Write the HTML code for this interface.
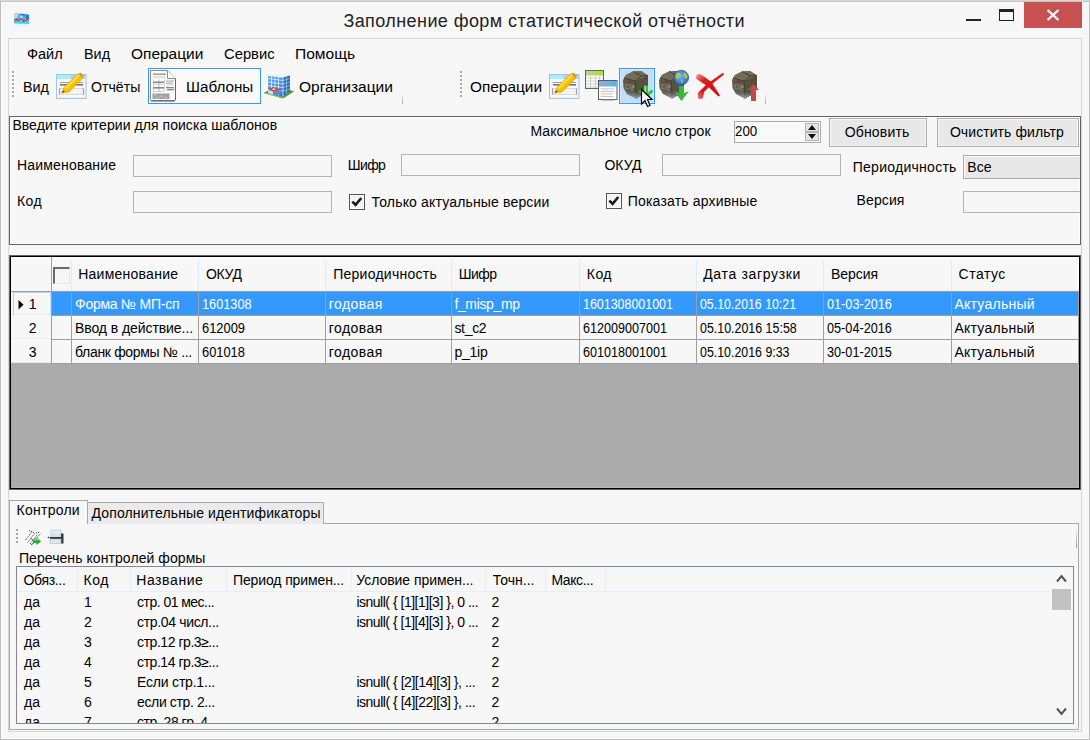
<!DOCTYPE html><html><head><meta charset="utf-8"><style>
html,body{margin:0;padding:0;width:1090px;height:740px;overflow:hidden;background:#f7f7f7}
.t{position:absolute;white-space:nowrap;font-family:"Liberation Sans",sans-serif;}
.r{position:absolute;}
</style></head><body>
<div class="r" style="left:0px;top:0px;width:1090px;height:740px;background:#f7f7f7;"></div>
<div class="r" style="left:1px;top:2px;width:1088px;height:737px;box-sizing:border-box;border-left:1px solid #fbfbfb;border-top:1px solid #fbfbfb;border-bottom:1px solid #fbfbfb;"></div>
<div class="r" style="left:0px;top:0px;width:1090px;height:1px;background:#d9d9d9;"></div>
<div class="r" style="left:0px;top:1px;width:1090px;height:1px;background:#c6c6c6;"></div>
<div class="r" style="left:0px;top:1px;width:1px;height:739px;background:#bebebe;"></div>
<div class="r" style="left:1089px;top:1px;width:1px;height:739px;background:#c0c0c0;"></div>
<div class="r" style="left:0px;top:739px;width:1090px;height:1px;background:#bdbdbd;"></div>
<div class="r" style="left:8px;top:38px;width:1074px;height:694px;box-sizing:border-box;border:1px solid #d6d6d6;"></div>
<svg class="r" style="left:13px;top:12px" width="17" height="16" viewBox="0 0 17 16">
<defs><linearGradient id="ai" x1="0" y1="0" x2="0" y2="1"><stop offset="0" stop-color="#3896f2"/><stop offset="1" stop-color="#48d0fa"/></linearGradient></defs>
<path d="M1 1 L7 1.5 L16 2.5 L16 12 L1 11.5Z" fill="url(#ai)"/>
<path d="M1 1 L6 1.5 L5 5 L1 8Z" fill="#b8dcf8"/>
<path d="M7 3.5 L10 3 L9 8 L7 9Z" fill="#d8ecfa" opacity="0.8"/>
<rect x="8" y="2.2" width="3.5" height="1.3" fill="#1a6ee0"/>
<rect x="13" y="3" width="3" height="4" fill="#1a7ae8"/>
<path d="M9.5 8.5 L11.5 8.5 L11.5 11 L9.5 11Z" fill="#40e070"/>
<path d="M12 7.5 L13 7.5 L13 11 L12 11Z" fill="#f0f040"/>
<polyline points="1.5,8.5 3,7 4.5,8.3 6.5,8 8,6.5 9.5,7.8 11,9.5 12.5,8.5 14,7.5 16,6" fill="none" stroke="#e82a18" stroke-width="1.1"/>
<path d="M1 12 L16 12.5 L15 15 L2 14Z" fill="#dcf2fc" opacity="0.8"/>
</svg>
<div class="t" style="left:343.40px;top:11.76px;font-size:18px;line-height:18px;color:#222;letter-spacing:0.419px;">Заполнение форм статистической отчётности</div>
<div class="r" style="left:966px;top:19px;width:15px;height:2px;background:#222;"></div>
<div class="r" style="left:999px;top:9px;width:15px;height:12px;box-sizing:border-box;border:1px solid #222;border-top:3px solid #222;"></div>
<div class="r" style="left:1024px;top:2px;width:58px;height:26px;background:#c75050;"></div>
<div class="r" style="left:1082px;top:2px;width:1px;height:27px;background:#fdfdfd;"></div>
<svg class="r" style="left:1046px;top:9px" width="14" height="12" viewBox="0 0 14 12"><path d="M1.5 1 L12.5 11 M12.5 1 L1.5 11" stroke="#fff" stroke-width="2.2"/></svg>
<div class="t" style="left:27.00px;top:45.95px;font-size:15.3px;line-height:15.3px;color:#000;transform:scaleX(0.9495);transform-origin:0 0;">Файл</div>
<div class="t" style="left:84.30px;top:45.95px;font-size:15.3px;line-height:15.3px;color:#000;transform:scaleX(0.9422);transform-origin:0 0;">Вид</div>
<div class="t" style="left:130.60px;top:45.95px;font-size:15.3px;line-height:15.3px;color:#000;transform:scaleX(1.0105);transform-origin:0 0;">Операции</div>
<div class="t" style="left:223.60px;top:45.95px;font-size:15.3px;line-height:15.3px;color:#000;transform:scaleX(0.9656);transform-origin:0 0;">Сервис</div>
<div class="t" style="left:294.90px;top:45.95px;font-size:15.3px;line-height:15.3px;color:#000;transform:scaleX(1.0169);transform-origin:0 0;">Помощь</div>
<div class="r" style="left:12px;top:71px;width:2px;height:2px;background:#a9a9a9;"></div>
<div class="r" style="left:12px;top:75px;width:2px;height:2px;background:#a9a9a9;"></div>
<div class="r" style="left:12px;top:79px;width:2px;height:2px;background:#a9a9a9;"></div>
<div class="r" style="left:12px;top:83px;width:2px;height:2px;background:#a9a9a9;"></div>
<div class="r" style="left:12px;top:87px;width:2px;height:2px;background:#a9a9a9;"></div>
<div class="r" style="left:12px;top:91px;width:2px;height:2px;background:#a9a9a9;"></div>
<div class="r" style="left:12px;top:95px;width:2px;height:2px;background:#a9a9a9;"></div>
<div class="t" style="left:22.70px;top:78.95px;font-size:15.3px;line-height:15.3px;color:#000;transform:scaleX(0.9350);transform-origin:0 0;">Вид</div>
<svg class="r" style="left:56px;top:72px" width="32" height="28" viewBox="0 0 32 28">
<defs><linearGradient id="tb56" x1="0" x2="1"><stop offset="0" stop-color="#a8f0f8"/><stop offset="0.45" stop-color="#a8f0f8"/><stop offset="0.5" stop-color="#b0d0f4"/><stop offset="1" stop-color="#b8d4f4"/></linearGradient></defs>
<rect x="0.5" y="2.5" width="29.5" height="24" fill="#f8f8f8" stroke="#9cc4f0"/>
<rect x="1" y="3" width="29" height="4" fill="url(#tb56)"/>
<rect x="3" y="8" width="25" height="17" fill="#fdfdfd" stroke="#e0e0e0" stroke-width="0.5"/>
<rect x="4" y="10" width="23" height="1" fill="#9a9a9a"/>
<rect x="4" y="12" width="23" height="1.6" fill="#70747c"/>
<rect x="3.5" y="16.5" width="24" height="6" fill="#f4f4f4" stroke="#d0d0d0" stroke-width="0.8"/><rect x="3.2" y="16.5" width="0.9" height="6" fill="#909090"/><rect x="26.9" y="16.5" width="0.9" height="6" fill="#909090"/>
<path d="M5.5 21 L8 15.5 L22 1.5 L27 6 L13 20 Z" fill="#f6c000" stroke="#d8a000" stroke-width="0.6"/>
<path d="M8.5 16 L22.5 2 L24 3.5 L10 17.5Z" fill="#ffe040"/>
<path d="M22.5 2 L24.5 0.5 L28 4 L26.5 6 Z" fill="#c8a040"/>
<path d="M6 21 L7.3 18.4 L8.6 19.7Z" fill="#333"/>
</svg>
<div class="t" style="left:91.00px;top:78.95px;font-size:15.3px;line-height:15.3px;color:#000;transform:scaleX(0.9232);transform-origin:0 0;">Отчёты</div>
<div class="r" style="left:148px;top:68px;width:113px;height:36px;box-sizing:border-box;border:1px solid #3399ff;background:#f9f9f9;"></div>
<svg class="r" style="left:150px;top:70px" width="27" height="32" viewBox="0 0 27 32">
<path d="M0.5 0.5 H17.5 L25.5 8.5 V29.5 Q25.5 30.5 24.5 30.5 H1.5 Q0.5 30.5 0.5 29.5Z" fill="#fbfbfb" stroke="#8c8c8c"/>
<path d="M1 30.5 H25 V31.5 H1Z" fill="#555"/>
<path d="M25.5 9 V30" stroke="#666"/>
<path d="M17.5 0.5 V8.5 H25.5" fill="#fff" stroke="#8a8a8a"/>
<g fill="#8a8a8a">
<rect x="3" y="3.5" width="13" height="1.4" opacity="0.9"/>
<rect x="3" y="6.5" width="12" height="1" opacity="0.5"/>
<rect x="3" y="11.5" width="11" height="1.6"/>
<rect x="3" y="17" width="11" height="1.6"/>
<rect x="3" y="9.5" width="0.7" height="12" opacity="0.5"/><rect x="8.5" y="9.5" width="0.8" height="12" opacity="0.7"/><rect x="14" y="9.5" width="0.7" height="12" opacity="0.5"/>
<rect x="3" y="14.3" width="11" height="0.6" opacity="0.4"/><rect x="3" y="21" width="11" height="0.7" opacity="0.5"/>
<rect x="16" y="10.5" width="8" height="1" opacity="0.7"/><rect x="16" y="12.5" width="7" height="1.2" opacity="0.7"/><rect x="17" y="14.5" width="6" height="0.8" opacity="0.5"/>
<rect x="16" y="17" width="8" height="1.3"/><rect x="17" y="19" width="7" height="1.3"/>
<rect x="2.5" y="23.5" width="17" height="5.5" opacity="0.8"/>
</g>
<g fill="#d8d8d8"><rect x="4" y="24.5" width="3" height="0.8"/><rect x="9" y="25.8" width="4" height="0.8"/><rect x="14" y="27" width="3" height="0.8"/><rect x="5" y="27.5" width="4" height="0.7"/></g>
</svg>
<div class="t" style="left:186.30px;top:78.95px;font-size:15.3px;line-height:15.3px;color:#000;transform:scaleX(0.9948);transform-origin:0 0;">Шаблоны</div>
<svg class="r" style="left:263px;top:73px" width="32" height="26" viewBox="0 0 32 26">
<defs><linearGradient id="bl" x1="0" y1="0" x2="1" y2="1"><stop offset="0" stop-color="#5aaaf0"/><stop offset="1" stop-color="#2a78d8"/></linearGradient></defs>
<path d="M0.5 20 L20 25.5 L31 18.5 L24 16 L6 17Z" fill="#4a9a30"/>
<path d="M0.5 20 L20 25.5 L20 24.5 L2 19.5Z" fill="#8ac870"/>
<path d="M5 2 L17 0.5 L27 2.5 L20 4.5Z" fill="#eef2f6"/>
<path d="M5 2.5 L20 4.5 L20 23.5 L5 19.5Z" fill="url(#bl)"/>
<path d="M20 4.5 L27 2.5 L27 18 L20 23.5Z" fill="#2e6cc0"/>
<g stroke="#e8f0f8" stroke-width="0.8" fill="none">
<path d="M5 5.5 L20 7.5 M5 9 L20 11 M5 12.5 L20 14.5 M5 16 L20 18 M8.5 3 V20.5 M12 3.5 V21.5 M15.5 4 V22.5"/>
</g>
<g stroke="#a8c4e8" stroke-width="0.7" fill="none">
<path d="M20 7.5 L27 5.5 M20 11 L27 9 M20 14.5 L27 12.5 M20 18 L27 16 M23.5 3.5 V21"/>
</g>
<path d="M5 2.5 L20 4.5 L20 23.5" stroke="#f4f8fc" stroke-width="0.7" fill="none"/>
<path d="M4.5 15.5 L13 14.5 L18 17 L10 18.5Z" fill="#e63a2a"/>
<path d="M9 15.8 L12 15.6 L13 16.6 L10 16.9Z" fill="#fff"/>
<path d="M5 17 L10 18.5 L10 22 L5 20Z" fill="#d8dce0"/>
<path d="M10 18.5 L18 17 L18 21 L10 22Z" fill="#4a90e0"/>
</svg>
<div class="t" style="left:298.80px;top:78.95px;font-size:15.3px;line-height:15.3px;color:#000;transform:scaleX(1.0157);transform-origin:0 0;">Организации</div>
<div class="r" style="left:402px;top:94px;width:1px;height:10px;background:linear-gradient(#eeeeee,#a8a8a8);"></div>
<div class="r" style="left:460px;top:71px;width:2px;height:2px;background:#a9a9a9;"></div>
<div class="r" style="left:460px;top:75px;width:2px;height:2px;background:#a9a9a9;"></div>
<div class="r" style="left:460px;top:79px;width:2px;height:2px;background:#a9a9a9;"></div>
<div class="r" style="left:460px;top:83px;width:2px;height:2px;background:#a9a9a9;"></div>
<div class="r" style="left:460px;top:87px;width:2px;height:2px;background:#a9a9a9;"></div>
<div class="r" style="left:460px;top:91px;width:2px;height:2px;background:#a9a9a9;"></div>
<div class="r" style="left:460px;top:95px;width:2px;height:2px;background:#a9a9a9;"></div>
<div class="t" style="left:469.70px;top:78.95px;font-size:15.3px;line-height:15.3px;color:#000;transform:scaleX(1.0063);transform-origin:0 0;">Операции</div>
<svg class="r" style="left:549px;top:72px" width="32" height="28" viewBox="0 0 32 28">
<defs><linearGradient id="tb549" x1="0" x2="1"><stop offset="0" stop-color="#a8f0f8"/><stop offset="0.45" stop-color="#a8f0f8"/><stop offset="0.5" stop-color="#b0d0f4"/><stop offset="1" stop-color="#b8d4f4"/></linearGradient></defs>
<rect x="0.5" y="2.5" width="29.5" height="24" fill="#f8f8f8" stroke="#9cc4f0"/>
<rect x="1" y="3" width="29" height="4" fill="url(#tb549)"/>
<rect x="3" y="8" width="25" height="17" fill="#fdfdfd" stroke="#e0e0e0" stroke-width="0.5"/>
<rect x="4" y="10" width="23" height="1" fill="#9a9a9a"/>
<rect x="4" y="12" width="23" height="1.6" fill="#70747c"/>
<rect x="3.5" y="16.5" width="24" height="6" fill="#f4f4f4" stroke="#d0d0d0" stroke-width="0.8"/><rect x="3.2" y="16.5" width="0.9" height="6" fill="#909090"/><rect x="26.9" y="16.5" width="0.9" height="6" fill="#909090"/>
<path d="M5.5 21 L8 15.5 L22 1.5 L27 6 L13 20 Z" fill="#f6c000" stroke="#d8a000" stroke-width="0.6"/>
<path d="M8.5 16 L22.5 2 L24 3.5 L10 17.5Z" fill="#ffe040"/>
<path d="M22.5 2 L24.5 0.5 L28 4 L26.5 6 Z" fill="#c8a040"/>
<path d="M6 21 L7.3 18.4 L8.6 19.7Z" fill="#333"/>
</svg>
<svg class="r" style="left:584px;top:69px" width="34" height="32" viewBox="0 0 34 32">
<defs><linearGradient id="tg" x1="0" x2="1"><stop offset="0" stop-color="#b4d890"/><stop offset="1" stop-color="#a8e030"/></linearGradient>
<linearGradient id="tbl" x1="0" x2="1"><stop offset="0" stop-color="#90acd0"/><stop offset="0.6" stop-color="#78b0e0"/><stop offset="1" stop-color="#40b8f8"/></linearGradient></defs>
<rect x="1.5" y="1.5" width="18" height="18" fill="#fbfbfb" stroke="#606468"/>
<rect x="2" y="2" width="17" height="4.5" fill="url(#tg)"/>
<g stroke="#b8b8b8" stroke-width="0.6"><path d="M2 9 H19 M2 12 H19 M2 15 H19 M2 18 H19 M6.5 6.5 V19 M11.5 6.5 V19 M15.5 6.5 V19"/></g>
<rect x="6" y="8" width="1.5" height="1" fill="#e8e060"/>
<rect x="14.5" y="11.5" width="18.5" height="19" fill="#fdfdfd" stroke="#585c60"/>
<rect x="15" y="12" width="17.5" height="5.5" fill="url(#tbl)"/>
<g fill="#b8b8b8"><rect x="16.5" y="19.5" width="14" height="0.8"/><rect x="16.5" y="22" width="14" height="0.8"/><rect x="16.5" y="24.5" width="12" height="0.8"/><rect x="16.5" y="27" width="13" height="0.8"/></g>
<g fill="#f0e070"><rect x="17" y="19" width="1.5" height="1"/><rect x="22" y="21.5" width="2" height="1"/><rect x="18" y="26.5" width="1.5" height="1"/></g>
<rect x="18" y="30.5" width="12" height="1" fill="#909090"/>
</svg>
<div class="r" style="left:619px;top:68px;width:36px;height:36px;box-sizing:border-box;border:1px solid #3399ff;background:#c2ddf9;box-shadow:inset 0 0 0 1px #d3e6fb;"></div>
<svg class="r" style="left:622px;top:70px" width="28" height="30" viewBox="0 0 28 30">
<defs><linearGradient id="cbt622" x1="0" y1="0" x2="0" y2="1"><stop offset="0.5" stop-color="#8a96b4" stop-opacity="0"/><stop offset="1" stop-color="#a0acc8" stop-opacity="0.9"/></linearGradient></defs>
<path d="M1 10 L4 5 L11 1.5 L19 1 L26 5.5 L26 19 L22 24 L14 28.5 L5 24 L1.5 18Z" fill="#5f5c4a"/>
<path d="M4 5 L11 1.5 L19 1 L26 5.5 L13 11 L2 8Z" fill="#716d59"/>
<path d="M13 11 L26 5.5 L26 19 L22 24 L14 28.5Z" fill="#55523f"/>
<path d="M2 8 L13 11 L14 28.5 M11 1.5 L19 6 L26 5.5 M19 6 L13 11" stroke="#3a382c" stroke-width="0.8" fill="none"/>
<g fill="#8c8870" opacity="0.9"><path d="M3.5 14 h3 v1 h-2 v3 h2 v1 h-3z"/><rect x="7.5" y="14.5" width="1" height="5"/><path d="M9.5 15 h3 v3 h-2 v3 h-1z"/></g>
<rect x="3" y="12" width="9" height="1" fill="#4a4838" opacity="0.7"/>
<path d="M1.5 16 L5 24 L14 28.5 L22 24 L26 19 L26 16 L14 21 L2 15Z" fill="url(#cbt622)"/>
<g fill="#a02020"><circle cx="8" cy="11" r="0.9"/><circle cx="16" cy="4" r="0.9"/><circle cx="21" cy="11" r="0.9"/><circle cx="24" cy="8.5" r="0.9"/></g>
</svg>
<svg class="r" style="left:638px;top:85px" width="16" height="14" viewBox="0 0 16 14"><path d="M6 0.5 H10 V7.5 L13.5 4.5 L15.5 6.5 L8 13.5 L0.5 6.5 L2.5 4.5 L6 7.5Z" fill="#3cbc40"/><path d="M6.5 1 H8 V8 H6.5Z" fill="#90f090"/></svg>
<svg class="r" style="left:640px;top:88px" width="14" height="20" viewBox="0 0 14 20"><path d="M1.5 1.5 L1.5 16 L5 12.5 L7.5 18.5 L10 17.5 L7.5 11.5 L12 11.5 Z" fill="#fff" stroke="#000" stroke-width="1.2" stroke-linejoin="miter"/></svg>
<svg class="r" style="left:658px;top:70px" width="28" height="30" viewBox="0 0 28 30">
<defs><linearGradient id="cbt658" x1="0" y1="0" x2="0" y2="1"><stop offset="0.5" stop-color="#8a96b4" stop-opacity="0"/><stop offset="1" stop-color="#a0acc8" stop-opacity="0.9"/></linearGradient></defs>
<path d="M1 10 L4 5 L11 1.5 L19 1 L26 5.5 L26 19 L22 24 L14 28.5 L5 24 L1.5 18Z" fill="#5f5c4a"/>
<path d="M4 5 L11 1.5 L19 1 L26 5.5 L13 11 L2 8Z" fill="#716d59"/>
<path d="M13 11 L26 5.5 L26 19 L22 24 L14 28.5Z" fill="#55523f"/>
<path d="M2 8 L13 11 L14 28.5 M11 1.5 L19 6 L26 5.5 M19 6 L13 11" stroke="#3a382c" stroke-width="0.8" fill="none"/>
<g fill="#8c8870" opacity="0.9"><path d="M3.5 14 h3 v1 h-2 v3 h2 v1 h-3z"/><rect x="7.5" y="14.5" width="1" height="5"/><path d="M9.5 15 h3 v3 h-2 v3 h-1z"/></g>
<rect x="3" y="12" width="9" height="1" fill="#4a4838" opacity="0.7"/>
<path d="M1.5 16 L5 24 L14 28.5 L22 24 L26 19 L26 16 L14 21 L2 15Z" fill="url(#cbt658)"/>
<g fill="#a02020"><circle cx="8" cy="11" r="0.9"/><circle cx="16" cy="4" r="0.9"/><circle cx="21" cy="11" r="0.9"/><circle cx="24" cy="8.5" r="0.9"/></g>
</svg>
<svg class="r" style="left:673px;top:69px" width="18" height="18" viewBox="0 0 18 18">
<defs><radialGradient id="gl" cx="0.45" cy="0.4" r="0.65"><stop offset="0" stop-color="#70b8f0"/><stop offset="1" stop-color="#2a64c0"/></radialGradient></defs>
<circle cx="8.3" cy="8.6" r="7.3" fill="url(#gl)" stroke="#2a5aa8" stroke-width="0.8"/>
<path d="M3 5 Q5 3 7 4 Q8 6 6.5 7.5 Q5 8 5.5 10 Q4 10.5 3 9Z M11 3.5 Q14 4.5 14.5 8 Q13.5 10 12 9.5 Q10.5 7 11 3.5Z M8 11 Q10 10.5 10 13 Q9 14.5 8 13Z" fill="#b8c834"/>
</svg>
<svg class="r" style="left:674px;top:86px" width="16" height="16" viewBox="0 0 16 16"><path d="M5 0 H10 V7 L15 5 L7.5 15 L0 5 L5 7Z" fill="#38b83c"/></svg>
<svg class="r" style="left:693px;top:70px" width="34" height="32" viewBox="0 0 34 32">
<defs><linearGradient id="xa" x1="0" y1="0" x2="1" y2="1"><stop offset="0" stop-color="#f4a0a0"/><stop offset="0.3" stop-color="#e02020"/><stop offset="1" stop-color="#d00808"/></linearGradient>
<linearGradient id="xb" x1="0" y1="1" x2="1" y2="0"><stop offset="0" stop-color="#f08080"/><stop offset="0.25" stop-color="#d81010"/><stop offset="1" stop-color="#e02020"/></linearGradient></defs>
<path d="M3 6.5 Q4 3 7.5 4.2 L18 11.5 L27 25.5 L25.5 26.5 L15 16.5 L4.5 9.8 Q2.5 8.5 3 6.5Z" fill="url(#xa)"/>
<path d="M31 3.2 L30.5 5 L18.5 14.5 L11 22 L10.2 27.5 Q8 30 5.2 28.5 L4.8 23 L14 14 L29.5 3Z" fill="url(#xb)"/>
</svg>
<svg class="r" style="left:731px;top:70px" width="28" height="30" viewBox="0 0 28 30">
<defs><linearGradient id="cbt731" x1="0" y1="0" x2="0" y2="1"><stop offset="0.5" stop-color="#8a96b4" stop-opacity="0"/><stop offset="1" stop-color="#a0acc8" stop-opacity="0.9"/></linearGradient></defs>
<path d="M1 10 L4 5 L11 1.5 L19 1 L26 5.5 L26 19 L22 24 L14 28.5 L5 24 L1.5 18Z" fill="#5f5c4a"/>
<path d="M4 5 L11 1.5 L19 1 L26 5.5 L13 11 L2 8Z" fill="#716d59"/>
<path d="M13 11 L26 5.5 L26 19 L22 24 L14 28.5Z" fill="#55523f"/>
<path d="M2 8 L13 11 L14 28.5 M11 1.5 L19 6 L26 5.5 M19 6 L13 11" stroke="#3a382c" stroke-width="0.8" fill="none"/>
<g fill="#8c8870" opacity="0.9"><path d="M3.5 14 h3 v1 h-2 v3 h2 v1 h-3z"/><rect x="7.5" y="14.5" width="1" height="5"/><path d="M9.5 15 h3 v3 h-2 v3 h-1z"/></g>
<rect x="3" y="12" width="9" height="1" fill="#4a4838" opacity="0.7"/>
<path d="M1.5 16 L5 24 L14 28.5 L22 24 L26 19 L26 16 L14 21 L2 15Z" fill="url(#cbt731)"/>
<g fill="#a02020"><circle cx="8" cy="11" r="0.9"/><circle cx="16" cy="4" r="0.9"/><circle cx="21" cy="11" r="0.9"/><circle cx="24" cy="8.5" r="0.9"/></g>
</svg>
<svg class="r" style="left:748px;top:84px" width="11" height="18" viewBox="0 0 11 18"><path d="M5.5 0 L11 6 H8 V17 H3 V6 H0Z" fill="#c84848"/></svg>
<div class="r" style="left:765px;top:94px;width:1px;height:10px;background:linear-gradient(#eeeeee,#a8a8a8);"></div>
<div class="r" style="left:9px;top:116px;width:1072px;height:129px;box-sizing:border-box;border:1px solid #646464;"></div>
<div class="r" style="left:10px;top:117px;width:1070px;height:127px;box-sizing:border-box;border:1px solid #ffffff;"></div>
<div class="t" style="left:12.40px;top:118.05px;font-size:14px;line-height:14px;color:#000;letter-spacing:0.057px;">Введите критерии для поиска шаблонов</div>
<div class="t" style="left:530.40px;top:123.65px;font-size:14px;line-height:14px;color:#000;letter-spacing:0.093px;">Максимальное число строк</div>
<div class="r" style="left:734px;top:121px;width:87px;height:22px;box-sizing:border-box;border:1px solid #aaaaaa;background:#f9f9f9;"></div>
<div class="t" style="left:735.40px;top:123.85px;font-size:14px;line-height:14px;color:#000;transform:scaleX(0.9507);transform-origin:0 0;">200</div>
<div class="r" style="left:805px;top:123px;width:14px;height:9px;box-sizing:border-box;border:1px solid #b4b4b4;background:#e6e6e6;"></div>
<div class="r" style="left:805px;top:132px;width:14px;height:9px;box-sizing:border-box;border:1px solid #b4b4b4;background:#e6e6e6;"></div>
<svg class="r" style="left:808px;top:125px" width="8" height="5" viewBox="0 0 8 5"><path d="M0 5 L4 0 L8 5Z" fill="#111"/></svg>
<svg class="r" style="left:808px;top:134px" width="8" height="5" viewBox="0 0 8 5"><path d="M0 0 L4 5 L8 0Z" fill="#111"/></svg>
<div class="r" style="left:829px;top:118px;width:98px;height:29px;box-sizing:border-box;border:1px solid #acacac;background:#e8e8e8;box-shadow:inset 0 0 0 1px #f8f8f8;"></div>
<div class="t" style="left:844.70px;top:124.95px;font-size:14px;line-height:14px;color:#000;letter-spacing:0.171px;">Обновить</div>
<div class="r" style="left:937px;top:118px;width:142px;height:29px;box-sizing:border-box;border:1px solid #acacac;background:#e8e8e8;box-shadow:inset 0 0 0 1px #f8f8f8;"></div>
<div class="t" style="left:949.90px;top:124.95px;font-size:14px;line-height:14px;color:#000;letter-spacing:0.082px;">Очистить фильтр</div>
<div class="t" style="left:16.90px;top:158.35px;font-size:14px;line-height:14px;color:#000;letter-spacing:0.195px;">Наименование</div>
<div class="r" style="left:133px;top:155px;width:199px;height:22px;box-sizing:border-box;border:1px solid #b4b4b4;background:#f7f7f7;"></div>
<div class="t" style="left:347.70px;top:158.15px;font-size:14px;line-height:14px;color:#000;letter-spacing:-0.583px;">Шифр</div>
<div class="r" style="left:401px;top:154px;width:179px;height:22px;box-sizing:border-box;border:1px solid #b4b4b4;background:#f7f7f7;"></div>
<div class="t" style="left:604.40px;top:158.15px;font-size:14px;line-height:14px;color:#000;letter-spacing:0.017px;">ОКУД</div>
<div class="r" style="left:662px;top:154px;width:179px;height:22px;box-sizing:border-box;border:1px solid #b4b4b4;background:#f7f7f7;"></div>
<div class="t" style="left:852.70px;top:160.15px;font-size:14px;line-height:14px;color:#000;letter-spacing:0.271px;">Периодичность</div>
<div class="r" style="left:963px;top:155px;width:117px;height:24px;box-sizing:border-box;border:1px solid #acacac;border-right:none;background:#e8e8e8;box-shadow:inset 1px 1px 0 #f8f8f8;"></div>
<div class="t" style="left:967.30px;top:160.15px;font-size:14px;line-height:14px;color:#000;">Все</div>
<div class="t" style="left:16.90px;top:194.15px;font-size:14px;line-height:14px;color:#000;letter-spacing:0.450px;">Код</div>
<div class="r" style="left:133px;top:191px;width:199px;height:22px;box-sizing:border-box;border:1px solid #b4b4b4;background:#f7f7f7;"></div>
<div class="r" style="left:349px;top:194px;width:16px;height:16px;box-sizing:border-box;border:1px solid #555;background:#f4f4f4;box-shadow:inset 0 0 0 1px #fff;"></div>
<svg class="r" style="left:349px;top:194px" width="16" height="16" viewBox="0 0 16 16"><path d="M3.3 7.6 L6.6 10.8 L12.3 4" fill="none" stroke="#1a1a1a" stroke-width="2.6"/></svg>
<div class="t" style="left:371.60px;top:194.65px;font-size:14px;line-height:14px;color:#000;letter-spacing:0.159px;">Только актуальные версии</div>
<div class="r" style="left:606px;top:193px;width:16px;height:16px;box-sizing:border-box;border:1px solid #555;background:#f4f4f4;box-shadow:inset 0 0 0 1px #fff;"></div>
<svg class="r" style="left:606px;top:193px" width="16" height="16" viewBox="0 0 16 16"><path d="M3.3 7.6 L6.6 10.8 L12.3 4" fill="none" stroke="#1a1a1a" stroke-width="2.6"/></svg>
<div class="t" style="left:627.80px;top:193.95px;font-size:14px;line-height:14px;color:#000;letter-spacing:0.178px;">Показать архивные</div>
<div class="t" style="left:856.60px;top:192.75px;font-size:14px;line-height:14px;color:#000;letter-spacing:0.100px;">Версия</div>
<div class="r" style="left:963px;top:191px;width:117px;height:22px;box-sizing:border-box;border:1px solid #b4b4b4;border-right:none;background:#f7f7f7;"></div>
<div class="r" style="left:9px;top:255px;width:1072px;height:235px;background:#646464;"></div>
<div class="r" style="left:10px;top:256px;width:1070px;height:233px;background:#000;"></div>
<div class="r" style="left:11px;top:257px;width:1068px;height:231px;background:#ababab;"></div>
<div class="r" style="left:1078px;top:257px;width:1px;height:231px;background:#b4b4b4;"></div>
<div class="r" style="left:11px;top:487px;width:1068px;height:1px;background:#b4b4b4;"></div>
<div class="r" style="left:11px;top:257px;width:1068px;height:34px;background:#f7f7f7;"></div>
<div class="r" style="left:11px;top:258px;width:1068px;height:1px;background:#ffffff;"></div>
<div class="r" style="left:71px;top:259px;width:1px;height:32px;background:#e2ebf5;"></div>
<div class="r" style="left:198px;top:259px;width:1px;height:32px;background:#e2ebf5;"></div>
<div class="r" style="left:325px;top:259px;width:1px;height:32px;background:#e2ebf5;"></div>
<div class="r" style="left:451px;top:259px;width:1px;height:32px;background:#e2ebf5;"></div>
<div class="r" style="left:579px;top:259px;width:1px;height:32px;background:#e2ebf5;"></div>
<div class="r" style="left:696px;top:259px;width:1px;height:32px;background:#e2ebf5;"></div>
<div class="r" style="left:823px;top:259px;width:1px;height:32px;background:#e2ebf5;"></div>
<div class="r" style="left:951px;top:259px;width:1px;height:32px;background:#e2ebf5;"></div>
<div class="r" style="left:51px;top:257px;width:1px;height:34px;background:#a0a0a0;"></div>
<div class="r" style="left:1077px;top:257px;width:2px;height:34px;background:#ffffff;"></div>
<div class="r" style="left:11px;top:291px;width:40px;height:1px;background:#a0a0a0;"></div>
<div class="r" style="left:52px;top:290px;width:1027px;height:1px;background:#e8eef6;"></div>
<div class="r" style="left:53px;top:267px;width:17px;height:17px;box-sizing:border-box;border:1px solid #e8e8e8;border-top:2px solid #6a6a6a;border-left:2px solid #6a6a6a;background:#f6f6f6;"></div>
<div class="t" style="left:78.20px;top:267.15px;font-size:14px;line-height:14px;color:#000;letter-spacing:0.250px;">Наименование</div>
<div class="t" style="left:206.10px;top:267.15px;font-size:14px;line-height:14px;color:#000;letter-spacing:-0.383px;">ОКУД</div>
<div class="t" style="left:333.20px;top:267.15px;font-size:14px;line-height:14px;color:#000;letter-spacing:0.254px;">Периодичность</div>
<div class="t" style="left:458.80px;top:267.15px;font-size:14px;line-height:14px;color:#000;letter-spacing:-0.583px;">Шифр</div>
<div class="t" style="left:586.80px;top:267.15px;font-size:14px;line-height:14px;color:#000;letter-spacing:0.450px;">Код</div>
<div class="t" style="left:703.20px;top:267.15px;font-size:14px;line-height:14px;color:#000;letter-spacing:0.667px;">Дата загрузки</div>
<div class="t" style="left:830.90px;top:267.15px;font-size:14px;line-height:14px;color:#000;letter-spacing:-0.020px;">Версия</div>
<div class="t" style="left:958.60px;top:267.15px;font-size:14px;line-height:14px;color:#000;letter-spacing:0.490px;">Статус</div>
<div class="r" style="left:51px;top:291px;width:1028px;height:24px;background:#3399ff;"></div>
<div class="r" style="left:51px;top:291px;width:1028px;height:1px;background:#a0a0a0;"></div>
<div class="r" style="left:51px;top:291px;width:1px;height:24px;background:#a0a0a0;"></div>
<div class="r" style="left:71px;top:291px;width:1px;height:24px;background:#a0a0a0;"></div>
<div class="r" style="left:198px;top:291px;width:1px;height:24px;background:#a0a0a0;"></div>
<div class="r" style="left:325px;top:291px;width:1px;height:24px;background:#a0a0a0;"></div>
<div class="r" style="left:451px;top:291px;width:1px;height:24px;background:#a0a0a0;"></div>
<div class="r" style="left:579px;top:291px;width:1px;height:24px;background:#a0a0a0;"></div>
<div class="r" style="left:696px;top:291px;width:1px;height:24px;background:#a0a0a0;"></div>
<div class="r" style="left:823px;top:291px;width:1px;height:24px;background:#a0a0a0;"></div>
<div class="r" style="left:951px;top:291px;width:1px;height:24px;background:#a0a0a0;"></div>
<div class="r" style="left:1078px;top:291px;width:1px;height:24px;background:#a0a0a0;"></div>
<div class="r" style="left:11px;top:292px;width:40px;height:23px;background:#f7f7f7;"></div>
<div class="r" style="left:11px;top:314px;width:40px;height:1px;background:#e4ebf3;"></div>
<div class="r" style="left:13px;top:292px;width:38px;height:24px;box-sizing:border-box;border:1px solid #bccfe6;border-right-color:#d0dcec;"></div>
<div class="t" style="left:28.80px;top:296.75px;font-size:14px;line-height:14px;color:#000;">1</div>
<svg class="r" style="left:17.5px;top:299.5px" width="6" height="10" viewBox="0 0 6 10"><path d="M0.5 0 L5.5 4.7 L0.5 9.5Z" fill="#000"/></svg>
<div class="t" style="left:75.00px;top:296.75px;font-size:14px;line-height:14px;color:#fff;letter-spacing:-0.242px;">Форма № МП-сп</div>
<div class="t" style="left:201.60px;top:296.75px;font-size:14px;line-height:14px;color:#fff;transform:scaleX(0.9101);transform-origin:0 0;">1601308</div>
<div class="t" style="left:328.70px;top:296.75px;font-size:14px;line-height:14px;color:#fff;letter-spacing:0.467px;">годовая</div>
<div class="t" style="left:454.40px;top:296.75px;font-size:14px;line-height:14px;color:#fff;letter-spacing:-0.356px;">f_misp_mp</div>
<div class="t" style="left:582.90px;top:296.75px;font-size:14px;line-height:14px;color:#fff;transform:scaleX(0.8883);transform-origin:0 0;">1601308001001</div>
<div class="t" style="left:699.60px;top:296.75px;font-size:14px;line-height:14px;color:#fff;transform:scaleX(0.8807);transform-origin:0 0;">05.10.2016 10:21</div>
<div class="t" style="left:826.70px;top:296.75px;font-size:14px;line-height:14px;color:#fff;transform:scaleX(0.9064);transform-origin:0 0;">01-03-2016</div>
<div class="t" style="left:954.40px;top:296.75px;font-size:14px;line-height:14px;color:#fff;letter-spacing:0.256px;">Актуальный</div>
<div class="r" style="left:51px;top:315px;width:1028px;height:24px;background:#f7f7f7;"></div>
<div class="r" style="left:51px;top:315px;width:1028px;height:1px;background:#a0a0a0;"></div>
<div class="r" style="left:51px;top:315px;width:1px;height:24px;background:#a0a0a0;"></div>
<div class="r" style="left:71px;top:315px;width:1px;height:24px;background:#a0a0a0;"></div>
<div class="r" style="left:198px;top:315px;width:1px;height:24px;background:#a0a0a0;"></div>
<div class="r" style="left:325px;top:315px;width:1px;height:24px;background:#a0a0a0;"></div>
<div class="r" style="left:451px;top:315px;width:1px;height:24px;background:#a0a0a0;"></div>
<div class="r" style="left:579px;top:315px;width:1px;height:24px;background:#a0a0a0;"></div>
<div class="r" style="left:696px;top:315px;width:1px;height:24px;background:#a0a0a0;"></div>
<div class="r" style="left:823px;top:315px;width:1px;height:24px;background:#a0a0a0;"></div>
<div class="r" style="left:951px;top:315px;width:1px;height:24px;background:#a0a0a0;"></div>
<div class="r" style="left:1078px;top:315px;width:1px;height:24px;background:#a0a0a0;"></div>
<div class="r" style="left:11px;top:315px;width:40px;height:24px;background:#f7f7f7;"></div>
<div class="r" style="left:11px;top:338px;width:40px;height:1px;background:#e4ebf3;"></div>
<div class="t" style="left:28.80px;top:320.75px;font-size:14px;line-height:14px;color:#000;">2</div>
<div class="t" style="left:75.00px;top:320.75px;font-size:14px;line-height:14px;color:#000;letter-spacing:-0.076px;">Ввод в действие...</div>
<div class="t" style="left:201.60px;top:320.75px;font-size:14px;line-height:14px;color:#000;transform:scaleX(0.9208);transform-origin:0 0;">612009</div>
<div class="t" style="left:328.70px;top:320.75px;font-size:14px;line-height:14px;color:#000;letter-spacing:0.467px;">годовая</div>
<div class="t" style="left:454.40px;top:320.75px;font-size:14px;line-height:14px;color:#000;letter-spacing:-0.312px;">st_c2</div>
<div class="t" style="left:582.90px;top:320.75px;font-size:14px;line-height:14px;color:#000;transform:scaleX(0.8989);transform-origin:0 0;">612009007001</div>
<div class="t" style="left:699.60px;top:320.75px;font-size:14px;line-height:14px;color:#000;transform:scaleX(0.8872);transform-origin:0 0;">05.10.2016 15:58</div>
<div class="t" style="left:826.70px;top:320.75px;font-size:14px;line-height:14px;color:#000;transform:scaleX(0.9064);transform-origin:0 0;">05-04-2016</div>
<div class="t" style="left:954.40px;top:320.75px;font-size:14px;line-height:14px;color:#000;letter-spacing:0.256px;">Актуальный</div>
<div class="r" style="left:51px;top:339px;width:1028px;height:24px;background:#f7f7f7;"></div>
<div class="r" style="left:51px;top:339px;width:1028px;height:1px;background:#a0a0a0;"></div>
<div class="r" style="left:51px;top:363px;width:1028px;height:1px;background:#a0a0a0;"></div>
<div class="r" style="left:51px;top:339px;width:1px;height:24px;background:#a0a0a0;"></div>
<div class="r" style="left:71px;top:339px;width:1px;height:24px;background:#a0a0a0;"></div>
<div class="r" style="left:198px;top:339px;width:1px;height:24px;background:#a0a0a0;"></div>
<div class="r" style="left:325px;top:339px;width:1px;height:24px;background:#a0a0a0;"></div>
<div class="r" style="left:451px;top:339px;width:1px;height:24px;background:#a0a0a0;"></div>
<div class="r" style="left:579px;top:339px;width:1px;height:24px;background:#a0a0a0;"></div>
<div class="r" style="left:696px;top:339px;width:1px;height:24px;background:#a0a0a0;"></div>
<div class="r" style="left:823px;top:339px;width:1px;height:24px;background:#a0a0a0;"></div>
<div class="r" style="left:951px;top:339px;width:1px;height:24px;background:#a0a0a0;"></div>
<div class="r" style="left:1078px;top:339px;width:1px;height:24px;background:#a0a0a0;"></div>
<div class="r" style="left:11px;top:339px;width:40px;height:24px;background:#f7f7f7;"></div>
<div class="r" style="left:11px;top:362px;width:40px;height:1px;background:#e4ebf3;"></div>
<div class="t" style="left:28.80px;top:344.75px;font-size:14px;line-height:14px;color:#000;">3</div>
<div class="t" style="left:75.00px;top:344.75px;font-size:14px;line-height:14px;color:#000;letter-spacing:-0.322px;">бланк формы № ...</div>
<div class="t" style="left:201.60px;top:344.75px;font-size:14px;line-height:14px;color:#000;transform:scaleX(0.9186);transform-origin:0 0;">601018</div>
<div class="t" style="left:328.70px;top:344.75px;font-size:14px;line-height:14px;color:#000;letter-spacing:0.467px;">годовая</div>
<div class="t" style="left:454.40px;top:344.75px;font-size:14px;line-height:14px;color:#000;letter-spacing:-0.212px;">p_1ip</div>
<div class="t" style="left:582.90px;top:344.75px;font-size:14px;line-height:14px;color:#000;transform:scaleX(0.8989);transform-origin:0 0;">601018001001</div>
<div class="t" style="left:699.60px;top:344.75px;font-size:14px;line-height:14px;color:#000;transform:scaleX(0.8844);transform-origin:0 0;">05.10.2016 9:33</div>
<div class="t" style="left:826.70px;top:344.75px;font-size:14px;line-height:14px;color:#000;transform:scaleX(0.9064);transform-origin:0 0;">30-01-2015</div>
<div class="t" style="left:954.40px;top:344.75px;font-size:14px;line-height:14px;color:#000;letter-spacing:0.256px;">Актуальный</div>
<div class="r" style="left:9px;top:523px;width:1070px;height:207px;box-sizing:border-box;border:1px solid #a8a8a8;"></div>
<div class="r" style="left:87px;top:502px;width:237px;height:22px;box-sizing:border-box;border:1px solid #acacac;border-bottom:none;background:#ebebeb;"></div>
<div class="t" style="left:91.60px;top:505.85px;font-size:14px;line-height:14px;color:#000;letter-spacing:0.118px;">Дополнительные идентификаторы</div>
<div class="r" style="left:9px;top:500px;width:79px;height:24px;box-sizing:border-box;border:1px solid #a8a8a8;border-bottom:none;background:#f7f7f7;"></div>
<div class="t" style="left:16.50px;top:503.45px;font-size:14px;line-height:14px;color:#000;letter-spacing:0.264px;">Контроли</div>
<div class="r" style="left:16px;top:529px;width:2px;height:2px;background:#a4a4a4;"></div>
<div class="r" style="left:16px;top:533px;width:2px;height:2px;background:#a4a4a4;"></div>
<div class="r" style="left:16px;top:537px;width:2px;height:2px;background:#a4a4a4;"></div>
<div class="r" style="left:16px;top:541px;width:2px;height:2px;background:#a4a4a4;"></div>
<svg class="r" style="left:24px;top:529px" width="19" height="17" viewBox="0 0 19 17">
<g stroke="#3a3a3a" stroke-width="0.9" stroke-dasharray="1.2 0.9" fill="none">
<path d="M1.5 11 L8 2.5"/><path d="M3.5 13.5 L11 4"/><path d="M6 15 L14 5"/><path d="M10 12 L16.5 4.5"/><path d="M5 1.5 L10 3.5"/><path d="M12 4 L16 3"/>
</g>
<path d="M7 9.5 L11 13 L7 16" fill="none" stroke="#2a2a2a" stroke-width="0.8"/>
<path d="M9 10.5 H12.5 V8.5 L17 12.5 L12.5 16 V14 H9Z" fill="#20b030"/>
<path d="M9 10.5 H12.5 V8.5 L14 10 V11.5 H9Z" fill="#60e060"/>
</svg>
<svg class="r" style="left:47px;top:529px" width="17" height="16" viewBox="0 0 17 16">
<circle cx="1.5" cy="8.5" r="0.8" fill="#222"/>
<rect x="4" y="1" width="10" height="5" fill="#e4ecf4" stroke="#b8c4cc" stroke-width="0.7"/>
<rect x="3" y="5.5" width="13" height="3" fill="#d8e0e8"/>
<rect x="3" y="8" width="13" height="2" fill="#1e3a3a"/>
<rect x="14" y="4.5" width="2.5" height="10" fill="#303838"/>
<rect x="3" y="10" width="11" height="4.5" fill="#dde6ee" stroke="#b0bcc4" stroke-width="0.6"/>
</svg>
<div class="r" style="left:1076px;top:530px;width:1px;height:18px;background:linear-gradient(#f0f0f0,#9a9a9a);"></div>
<div class="t" style="left:18.90px;top:551.25px;font-size:14px;line-height:14px;color:#000;letter-spacing:0.072px;">Перечень контролей формы</div>
<div class="r" style="left:16px;top:566px;width:1058px;height:158px;box-sizing:border-box;border:1px solid #828790;background:#f7f7f7;"></div>
<div class="r" style="left:77px;top:567px;width:1px;height:24px;background:#e4eef8;"></div>
<div class="r" style="left:130px;top:567px;width:1px;height:24px;background:#e4eef8;"></div>
<div class="r" style="left:226px;top:567px;width:1px;height:24px;background:#e4eef8;"></div>
<div class="r" style="left:351px;top:567px;width:1px;height:24px;background:#e4eef8;"></div>
<div class="r" style="left:485px;top:567px;width:1px;height:24px;background:#e4eef8;"></div>
<div class="r" style="left:545px;top:567px;width:1px;height:24px;background:#e4eef8;"></div>
<div class="r" style="left:605px;top:567px;width:1px;height:24px;background:#e4eef8;"></div>
<div class="r" style="left:17px;top:591px;width:1034px;height:1px;background:#e4eef8;"></div>
<div class="t" style="left:23.50px;top:573.15px;font-size:14px;line-height:14px;color:#000;letter-spacing:-0.325px;">Обяз...</div>
<div class="t" style="left:83.40px;top:573.15px;font-size:14px;line-height:14px;color:#000;letter-spacing:0.600px;">Код</div>
<div class="t" style="left:136.20px;top:573.15px;font-size:14px;line-height:14px;color:#000;letter-spacing:0.593px;">Название</div>
<div class="t" style="left:233.00px;top:573.15px;font-size:14px;line-height:14px;color:#000;letter-spacing:-0.120px;">Период примен...</div>
<div class="t" style="left:356.30px;top:573.15px;font-size:14px;line-height:14px;color:#000;letter-spacing:-0.050px;">Условие примен...</div>
<div class="t" style="left:492.80px;top:573.15px;font-size:14px;line-height:14px;color:#000;">Точн...</div>
<div class="t" style="left:551.40px;top:573.15px;font-size:14px;line-height:14px;color:#000;letter-spacing:-0.392px;">Макс...</div>
<div class="r" style="left:17px;top:591px;width:1034px;height:132px;overflow:hidden">
<div class="t" style="left:7.00px;top:4.15px;font-size:14px;line-height:14px;color:#000;">да</div>
<div class="t" style="left:67.00px;top:4.15px;font-size:14px;line-height:14px;color:#000;">1</div>
<div class="t" style="left:120.10px;top:4.15px;font-size:14px;line-height:14px;color:#000;letter-spacing:-0.538px;">стр. 01 мес...</div>
<div class="t" style="left:339.40px;top:4.15px;font-size:14px;line-height:14px;color:#000;letter-spacing:-0.489px;">isnull( { [1][1][3] }, 0 ...</div>
<div class="t" style="left:474.60px;top:4.15px;font-size:14px;line-height:14px;color:#000;">2</div>
<div class="t" style="left:7.00px;top:24.15px;font-size:14px;line-height:14px;color:#000;">да</div>
<div class="t" style="left:67.00px;top:24.15px;font-size:14px;line-height:14px;color:#000;">2</div>
<div class="t" style="left:120.10px;top:24.15px;font-size:14px;line-height:14px;color:#000;letter-spacing:-0.346px;">стр.04 числ...</div>
<div class="t" style="left:339.40px;top:24.15px;font-size:14px;line-height:14px;color:#000;letter-spacing:-0.489px;">isnull( { [1][4][3] }, 0 ...</div>
<div class="t" style="left:474.60px;top:24.15px;font-size:14px;line-height:14px;color:#000;">2</div>
<div class="t" style="left:7.00px;top:44.15px;font-size:14px;line-height:14px;color:#000;">да</div>
<div class="t" style="left:67.00px;top:44.15px;font-size:14px;line-height:14px;color:#000;">3</div>
<div class="t" style="left:120.10px;top:44.15px;font-size:14px;line-height:14px;color:#000;letter-spacing:-0.461px;">стр.12 гр.3≥...</div>
<div class="t" style="left:474.60px;top:44.15px;font-size:14px;line-height:14px;color:#000;">2</div>
<div class="t" style="left:7.00px;top:64.15px;font-size:14px;line-height:14px;color:#000;">да</div>
<div class="t" style="left:67.00px;top:64.15px;font-size:14px;line-height:14px;color:#000;">4</div>
<div class="t" style="left:120.10px;top:64.15px;font-size:14px;line-height:14px;color:#000;letter-spacing:-0.461px;">стр.14 гр.3≥...</div>
<div class="t" style="left:474.60px;top:64.15px;font-size:14px;line-height:14px;color:#000;">2</div>
<div class="t" style="left:7.00px;top:84.15px;font-size:14px;line-height:14px;color:#000;">да</div>
<div class="t" style="left:67.00px;top:84.15px;font-size:14px;line-height:14px;color:#000;">5</div>
<div class="t" style="left:120.10px;top:84.15px;font-size:14px;line-height:14px;color:#000;letter-spacing:-0.208px;">Если стр.1...</div>
<div class="t" style="left:339.40px;top:84.15px;font-size:14px;line-height:14px;color:#000;letter-spacing:-0.473px;">isnull( { [2][14][3] }, ...</div>
<div class="t" style="left:474.60px;top:84.15px;font-size:14px;line-height:14px;color:#000;">2</div>
<div class="t" style="left:7.00px;top:104.15px;font-size:14px;line-height:14px;color:#000;">да</div>
<div class="t" style="left:67.00px;top:104.15px;font-size:14px;line-height:14px;color:#000;">6</div>
<div class="t" style="left:120.10px;top:104.15px;font-size:14px;line-height:14px;color:#000;letter-spacing:-0.385px;">если стр. 2...</div>
<div class="t" style="left:339.40px;top:104.15px;font-size:14px;line-height:14px;color:#000;letter-spacing:-0.473px;">isnull( { [4][22][3] }, ...</div>
<div class="t" style="left:474.60px;top:104.15px;font-size:14px;line-height:14px;color:#000;">2</div>
<div class="t" style="left:7.00px;top:124.15px;font-size:14px;line-height:14px;color:#000;">да</div>
<div class="t" style="left:67.00px;top:124.15px;font-size:14px;line-height:14px;color:#000;">7</div>
<div class="t" style="left:120.10px;top:124.15px;font-size:14px;line-height:14px;color:#000;letter-spacing:-0.490px;">стр. 28 гр. 4...</div>
<div class="t" style="left:474.60px;top:124.15px;font-size:14px;line-height:14px;color:#000;">2</div>
</div>
<svg class="r" style="left:1056px;top:574px" width="11" height="9" viewBox="0 0 11 9"><path d="M1 7.5 L5.5 2 L10 7.5" fill="none" stroke="#555" stroke-width="2"/></svg>
<div class="r" style="left:1052px;top:589px;width:19px;height:21px;background:#c2c2c2;"></div>
<svg class="r" style="left:1056px;top:707px" width="11" height="9" viewBox="0 0 11 9"><path d="M1 1.5 L5.5 7 L10 1.5" fill="none" stroke="#555" stroke-width="2"/></svg>
</body></html>
